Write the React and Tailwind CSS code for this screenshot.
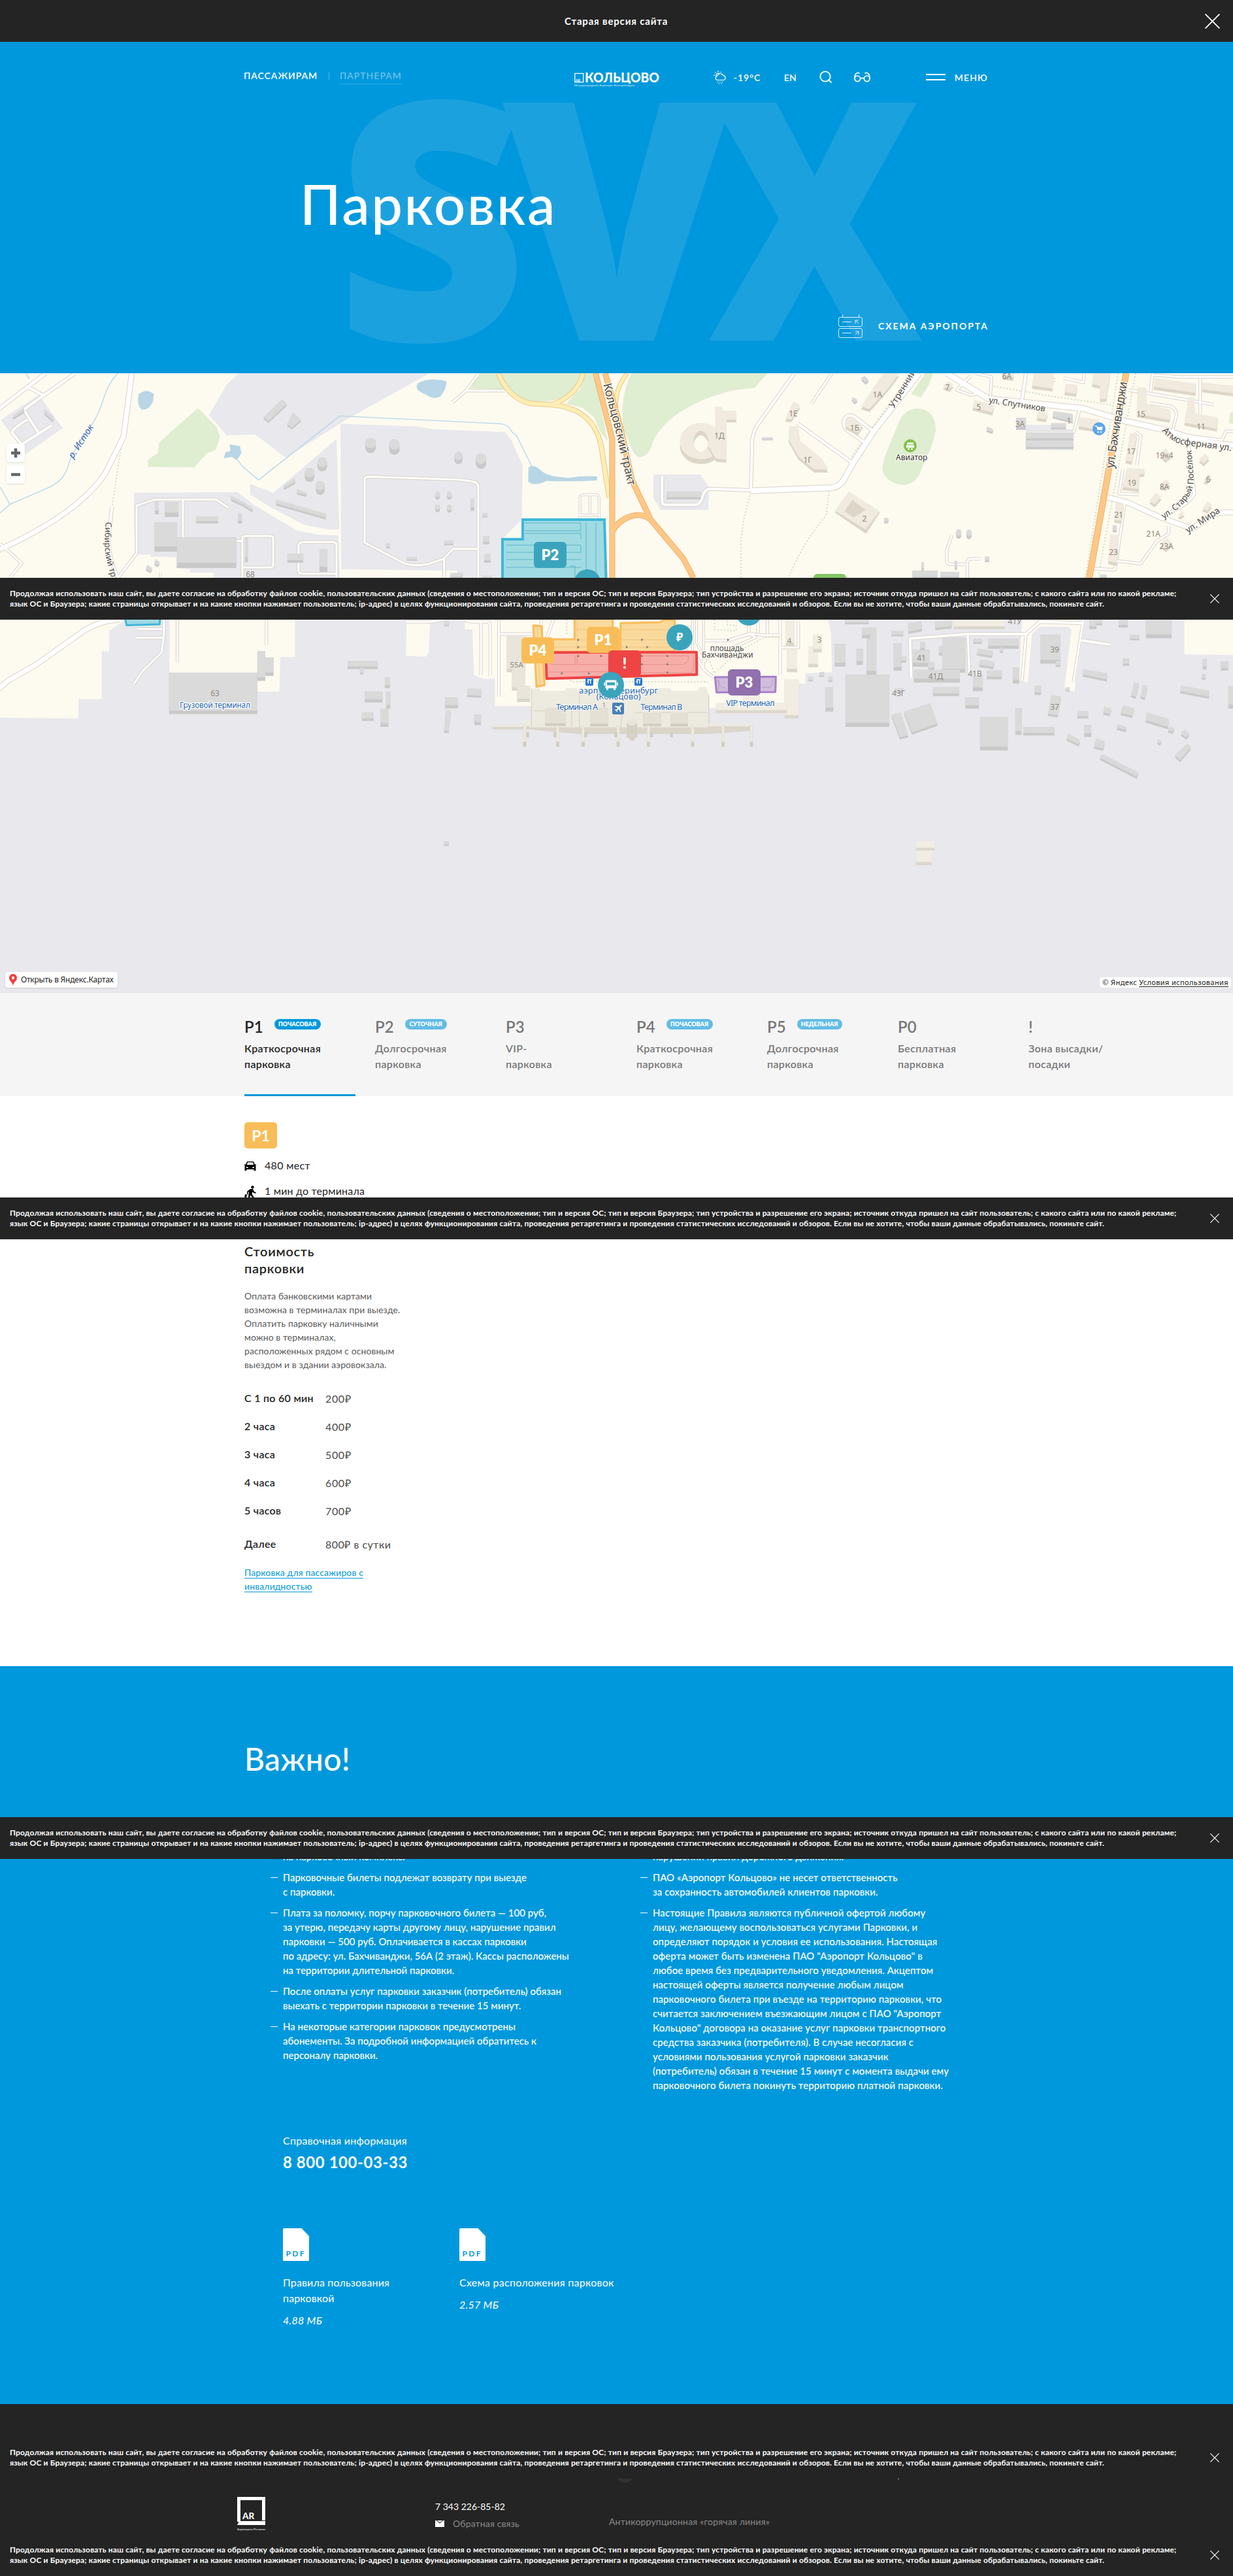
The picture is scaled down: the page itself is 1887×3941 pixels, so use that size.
import React from 'react';

const ROOF = '#dadada';
const SHADE = '#c9c9c9';
const BEIGE = '#f0eadf';
const BEIGE_SHADE = '#ddd6c8';

/* ---------- Map primitives ---------- */

const Areas = ({ list, fill }) => list.map((p, i) => <polygon key={i} points={p} fill={fill} />);

const Roads = ({ list, core = '#ffffff', edge = '#d9d2c8' }) => (
  <g fill="none" strokeLinejoin="round" strokeLinecap="butt">
    {list.map(([d, w = 4], i) => (
      <path key={i} d={d} stroke={edge} strokeWidth={w + 2} vectorEffect="non-scaling-stroke" />
    ))}
    {list.map(([d, w = 4], i) => (
      <path key={i} d={d} stroke={core} strokeWidth={w} vectorEffect="non-scaling-stroke" />
    ))}
  </g>
);

const Dots = ({ list, color = '#cfe0bd' }) => (
  <g fill="none" stroke={color} strokeWidth="2" strokeDasharray="2 3">
    {list.map((d, i) => (
      <path key={i} d={d} vectorEffect="non-scaling-stroke" />
    ))}
  </g>
);

const Blocks = ({ list, roof = ROOF, shade = SHADE, depth = 14 }) =>
  list.map(([x, y, w, h], i) => {
    const d = Math.min(depth, h * 0.3);
    return (
      <g key={i}>
        <rect x={x} y={y} width={w} height={h} fill={shade} />
        <rect x={x} y={y} width={w} height={h - d} fill={roof} />
      </g>
    );
  });

const Polys = ({ list, roof = ROOF, shade = SHADE, depth = 9 }) =>
  list.map((p, i) => (
    <g key={i}>
      <polygon points={p} fill={shade} transform={`translate(0 ${depth})`} />
      <polygon points={p} fill={roof} />
    </g>
  ));

const Tanks = ({ list }) =>
  list.map(([x, y, w, h], i) => (
    <g key={i}>
      <rect x={x - w / 2} y={y - h / 2} width={w} height={h} rx={w / 2} ry={h / 3} fill={SHADE} />
      <rect x={x - w / 2} y={y - h / 2} width={w} height={h * 0.68} rx={w / 2} ry={h / 3} fill={ROOF} />
    </g>
  ));

const Num = ({ x, y, children, fill = '#8f887c' }) => (
  <text x={x} y={y} fontSize="12" fill={fill} textAnchor="middle">
    {children}
  </text>
);

const Marker = ({ x, y, color, label }) => (
  <g>
    <rect x={x} y={y} width="50" height="40" rx="6" fill={color} />
    <text x={x + 25} y={y + 28} fontSize="22" fontWeight="800" fill="#fff" textAnchor="middle" fontFamily="Lato, sans-serif">
      {label}
    </text>
  </g>
);

function CityMap() {
  return (
    <svg width="1887" height="948" viewBox="0 0 1887 948" className="block" fontFamily="'Noto Sans', sans-serif">
      <defs>
        <path id="koltsovskiy" d="M923 17 L943 92 L963 180" />
        <path id="sibirskiy" d="M162 227 Q158 265 163 285 L175 330" />
        <path id="atmos" d="M1778 88 Q1795 108 1815 110 L1885 119" />
        <path id="posyolok" d="M1781 223 Q1826 195 1827 165 L1823 110" />
      </defs>
      <rect width="1887" height="948" fill="#fdfaf0" />

      {/* north-west quarter */}
      <g transform="matrix(.6059 0 0 .3333 0 -6)">
        <Areas
          fill="#e8e8ed"
          list={[
            '2,232 98,118 105,135 158,270 64,390 30,300',
            '603,18 1085,18 880,225 722,406 645,300 572,302 528,210 572,72',
            '860,250 1055,263 1095,275 1275,288 1290,320 1320,440 1318,690 1268,780 1268,960 1155,960 1155,924 862,918',
            '850,320 857,735 830,735 770,715 690,640 632,575 632,526 690,568',
            '338,567 600,564 640,620 750,740 800,758 855,762 858,960 540,960 540,933 480,933 480,918 445,912 445,862 380,860 380,850 340,850',
          ]}
        />
        <Areas
          fill="#dfedd1"
          list={[
            '500,178 546,262 556,310 545,370 523,385 490,450 373,448 374,415 398,385 402,335',
            '1210,18 1258,18 1278,92 1188,88',
            '1480,18 1500,18 1535,330 1518,290 1500,220 1470,175 1430,158 1465,90',
          ]}
        />
        <path d="M1265,18 H1466 C1455,100 1430,148 1360,148 C1310,145 1275,90 1265,18Z" fill="#dfedd1" />
        <g fill="#b8d6e5">
          <path d="M350,115 Q370,85 389,115 L386,150 Q375,190 358,185 Q345,165 350,115Z" />
          <path d="M1055,65 Q1080,34 1128,55 Q1128,90 1112,125 Q1095,142 1075,115 Q1045,95 1055,65Z" />
          <path d="M580,345 L606,352 L610,385 L598,417 L585,402 L565,408 L570,380 L582,375Z" />
          <path d="M1335,450 Q1348,430 1370,470 Q1390,495 1440,498 Q1470,488 1508,492 L1508,510 Q1450,516 1380,512 Q1350,540 1334,515Z" />
        </g>
        <g fill="none" stroke="#b3d8e8" strokeWidth="1.3">
          <path vectorEffect="non-scaling-stroke" d="M298,18 C260,90 265,150 240,230 C215,310 200,330 178,410 C165,500 150,520 120,545 L25,620 L0,660 M25,620 L0,540 M66,18 L74,45" />
          <path vectorEffect="non-scaling-stroke" d="M600,415 L612,445 L653,508 L858,214 L1265,250 Q1285,255 1292,285 L1305,305 L1343,445" />
        </g>
        <Dots list={['M308,335 L283,630']} />
        <Roads
          list={[
            ['M333,18 L312,310 L265,480 C220,600 130,720 -5,830', 7],
            ['M283,630 L275,760 Q272,860 298,957', 4],
            ['M115,18 L-5,185', 5],
            ['M190,18 L110,120 L60,185 L100,300', 4],
            ['M70,80 L110,120', 4],
            ['M130,258 L55,345 L30,290 Q32,270 70,230', 4],
            ['M0,800 L55,890 L25,957', 3],
            ['M577,635 L545,597 L390,598 L345,625 L345,845 L298,957', 3],
            ['M462,600 L462,775 L470,788 L612,788', 3],
            ['M612,957 V775 Q612,765 622,765 H680 Q690,765 690,775 V900 Q690,910 680,910 H612', 3],
            ['M850,957 V805 Q850,793 838,793 H770 Q754,793 754,810 V925 Q754,938 765,938 H850', 3],
            ['M1208,957 V540 Q1208,518 1190,514 L1160,506 L930,493 Q921,495 921,505 V795 L1020,890 Q1045,905 1080,895 L1120,870 L1145,824 H1205', 3],
            ['M1122,870 V957', 3],
            ['M1210,18 L1177,98 L1142,153', 3],
            ['M1177,98 L1275,98', 3],
            ['M1465,690 V590 Q1465,576 1475,576 H1505 Q1513,576 1513,590 V690', 2],
            ['M1490,580 V665 M1465,670 H1513', 2],
            ['M405,933 V957', 2],
          ]}
        />
        <Polys
          list={[
            '712,137 725,158 678,238 665,220', '740,197 761,230 737,268 725,252',
            '697,597 824,662 822,680 697,616', '583,578 616,610 616,622 584,596', '616,610 640,638 637,647 614,622',
            '745,497 746,516 718,545 716,534', '750,550 776,568 773,576 750,566', '32,212 60,178 62,190 35,222',
            '112,180 136,220 133,235 112,200', '392,870 404,886 398,900 390,890', '372,898 385,913 380,927 368,915',
          ]}
        />
        <Blocks
          depth={24}
          list={[
            [390, 703, 57, 134], [447, 772, 150, 140], [416, 610, 35, 68], [495, 675, 56, 32], [391, 608, 10, 57],
            [601, 660, 10, 48], [726, 846, 40, 42], [807, 825, 20, 105], [619, 772, 7, 113], [1189, 594, 9, 56],
            [1218, 660, 13, 20], [1220, 765, 16, 38], [1122, 786, 23, 22], [1027, 861, 26, 18], [1223, 846, 16, 42],
            [975, 798, 10, 24], [1137, 935, 32, 22], [1218, 948, 25, 10],
          ]}
        />
        <Tanks
          list={[
            [936, 350, 26, 70], [996, 357, 26, 70], [814, 437, 24, 64], [782, 485, 24, 64], [809, 545, 22, 64],
            [1158, 407, 21, 56], [1215, 422, 26, 70], [1105, 580, 12, 36], [1135, 580, 12, 36], [1105, 638, 12, 36], [1135, 640, 12, 36],
          ]}
        />
      </g>

      {/* north-east quarter */}
      <g transform="matrix(.6059 0 0 .3333 937 -6)">
        <path d="M50,18 H392 L360,85 L310,95 C200,140 130,230 103,330 C98,380 80,405 70,404 C55,400 50,370 30,280 C20,200 28,80 50,18Z" fill="#dfedd1" />
        <path d="M770,180 C800,178 817,220 817,280 C810,350 800,380 785,440 C775,500 760,530 733,530 C700,525 683,490 682,450 C690,380 705,330 725,240 C735,200 750,182 770,180Z" fill="#dfedd1" />
        <Areas fill="#dfedd1" list={['790,18 810,18 800,70 780,128 755,115', '1560,200 1568,195 1568,250 1558,248']} />
        <Areas fill="#e8e8ed" list={['104,483 222,483 244,540 243,645 122,645 104,590', '1045,255 1107,255 1107,275 1165,275 1165,372 1043,369']} />
        <Dots list={['M755,18 L603,405', 'M350,565 L332,690 L325,790 V957', 'M548,560 L540,670 Q480,800 445,957', 'M1322,18 L1227,957', 'M1278,18 L1195,957', 'M955,75 L1115,125 L1265,165']} />
        <Roads
          list={[
            ['M460,18 L365,260 Q350,310 353,370 L350,555', 4],
            ['M350,555 L245,548 Q235,550 230,575 L222,610 Q218,622 208,622 H135 Q126,622 126,610 V488', 4],
            ['M350,557 L555,544 Q580,535 590,490 L608,430 L660,285 L775,18', 8],
            ['M555,18 L503,158', 3], ['M467,247 L607,430', 4],
            ['M660,285 L610,215 Q595,205 588,225 Q580,250 590,275 L640,340', 4],
            ['M845,18 L950,135 L1190,180 L1290,235 L1400,280 Q1500,345 1570,348', 8],
            ['M1045,18 L1035,140', 4], ['M918,18 L958,35 L955,120', 3], ['M905,30 L870,95 L905,118 L930,110', 3],
            ['M1098,18 Q1095,48 1120,50', 3], ['M1140,40 L1190,60 L1192,18', 3], ['M1305,95 L1520,162', 3],
            ['M1365,18 L1360,100', 3], ['M1358,155 L1410,170 Q1425,180 1425,210 L1415,285', 3], ['M1485,40 V205', 3],
            ['M1365,25 L1430,35 L1568,35', 3], ['M1180,190 L1165,290 H1048', 3], ['M1320,285 L1335,305 L1325,440', 3],
            ['M1250,587 L1300,610 L1385,680 L1465,732 L1500,690 Q1520,650 1570,658', 7],
            ['M1455,350 L1470,570 Q1460,620 1380,680', 4], ['M1295,610 L1270,920 L1215,915', 3],
            ['M1275,880 L1335,892 L1375,790 L1405,755 V720', 3], ['M1290,460 L1280,570 L1330,575', 3],
            ['M858,760 L845,830 V885 Q848,895 860,895 H895 M930,870 H905 Q897,870 897,885 V957', 3],
            ['M1455,305 L1540,325 L1550,285 H1568', 3],
          ]}
        />
        <Roads core="#fdeeb3" edge="#e9c98c" list={[
          ['M-288,18 C-270,100 -235,160 -186,160 C-106,160 -46,200 -28,350 L-8,590', 6],
          ['M-74,18 C-82,90 -116,140 -150,160', 6],
          ['M38,18 C5,90 5,160 14,250', 5],
        ]} />
        <Roads core="#fdc886" edge="#eeb06c" list={[
          ['M-42,18 L0,320 V957', 7], ['M-18,18 L20,260 L50,510 L97,690 L180,870 L205,957', 7],
          ['M0,745 C20,680 65,645 97,690', 7], ['M1298,18 L1205,957', 8],
        ]} />
        <ellipse cx="224" cy="332" rx="36" ry="66" fill="none" stroke={BEIGE_SHADE} strokeWidth="34" transform="translate(0 20)" />
        <ellipse cx="224" cy="330" rx="36" ry="66" fill="none" stroke={BEIGE} strokeWidth="34" />
        <Polys roof={BEIGE} shade={BEIGE_SHADE} depth={14} list={[
          '260,172 278,172 278,190 313,190 313,230 288,230 288,415 262,410 240,345 262,330',
          '458,147 475,165 452,230 437,225', '447,260 470,262 475,330 500,365 530,410 545,460 510,460 470,400 445,320',
          '685,18 725,18 700,80 650,182 628,170', '590,230 605,215 634,255 620,290 588,260',
          '848,55 862,70 852,90 835,78', '915,140 965,165 960,198 910,175', '985,18 1015,18 1012,40 985,32',
          '1065,18 1115,18 1112,88 1060,75', '1145,66 1175,72 1172,112 1142,105', '1215,18 1258,18 1248,136 1232,136 1232,75 1212,68',
          '1370,40 1475,65 1473,108 1367,80', '1490,60 1568,75 1568,110 1490,92', '1327,82 1350,85 1350,160 1410,185 1408,232 1325,205',
          '1455,130 1470,130 1472,200 1530,222 1527,272 1445,245', '1308,292 1326,300 1312,425 1296,418',
          '1300,452 1345,458 1343,480 1332,480 1330,550 1288,540', '1272,612 1293,618 1286,695 1268,690', '1258,758 1280,762 1274,888 1252,880',
          '1075,190 1100,200 1095,230 1072,222', '1180,220 1230,230 1225,275 1178,262',
          '1398,362 1412,395 1398,415 1383,392', '1497,388 1508,405 1494,432 1482,412', '1399,503 1410,525 1396,545 1384,530',
          '1506,478 1514,492 1503,515 1493,510', '1373,568 1387,585 1370,620 1357,602', '1504,605 1515,622 1503,648 1490,638',
          '1438,652 1446,660 1436,676 1428,670', '1400,772 1414,800 1398,825 1384,802',
        ]} />
        <polygon points="598,562 676,658 641,755 562,658" fill={BEIGE_SHADE} />
        <path fillRule="evenodd" d="M598,562 L675,650 L640,735 L562,648Z M606,600 L640,645 L610,680 L587,652Z" fill={BEIGE} />
        <Polys list={['1115,192 1163,205 1163,240 1112,216', '628,40 638,30 648,50 640,62', '604,133 610,128 620,142 612,152', '947,262 963,275 960,288 945,278']} />
        <Blocks list={[[137, 562, 87, 35], [758, 924, 64, 40], [829, 930, 47, 30], [941, 860, 11, 25], [1020, 223, 25, 55], [1108, 248, 38, 28], [1045, 290, 120, 38], [1045, 332, 120, 34], [1264, 716, 10, 32], [1232, 942, 17, 15], [378, 312, 28, 14], [781, 885, 6, 40], [865, 880, 6, 40]]} />
        <Tanks list={[[875, 756, 13, 44], [901, 758, 13, 44], [692, 695, 11, 26]]} />
      </g>

      {/* airfield */}
      <rect y="377" width="1887" height="571" fill="#e8e8ed" />
      <g transform="matrix(.6059 0 0 .3763 0 369)">
        <Areas fill="#fdfaf0" list={[
          '0,20 320,20 276,66 276,150 257,150 257,344 198,344 198,423 0,420',
          '428,20 745,20 745,174 708,173 706,314 650,314 650,237 428,237',
          '1027,20 1086,38 1083,155 1075,172 1025,168',
          '1174,20 1570,20 1570,372 1250,372 1250,262 1220,262 1197,245 1193,61 1174,61',
        ]} />
        <Roads list={[
          ['M300,20 Q240,30 200,80 L90,205 L20,270 L-5,305', 7], ['M414,20 V80 L408,155 L360,230 L338,283', 3],
          ['M348,60 H410 M343,95 H410', 3], ['M448,20 V195', 3], ['M673,20 V125', 3], ['M1027,30 H1090 L1120,22', 3],
          ['M1172,22 L1190,30 H1230 Q1238,30 1238,45 V250 M1215,30 V245', 3], ['M1260,20 V335 M1260,80 H1345 M1367,20 V60 M1398,20 L1380,100', 3],
        ]} />
        <Blocks list={[
          [427, 237, 223, 168], [664, 175, 27, 75], [650, 150, 20, 120], [878, 190, 76, 32], [909, 218, 9, 26], [972, 255, 13, 45], [921, 314, 45, 44],
          [975, 314, 11, 68], [914, 399, 30, 34], [961, 383, 20, 74], [1124, 338, 33, 44], [1198, 408, 17, 42], [1121, 922, 13, 19], [1122, 28, 12, 20],
        ]} />
        <Polys list={['1181,300 1216,303 1215,330 1180,327', '1126,388 1139,390 1133,474 1121,472']} />
        <Blocks roof="#e9e5da" shade="#dad6ca" list={[[1280, 85, 47, 150], [1293, 200, 33, 110], [1306, 290, 33, 66]]} />
        <polygon points="315,10 405,10 403,40 320,44" fill="#9fd9e4" stroke="#3db8d8" strokeWidth="3" vectorEffect="non-scaling-stroke" />
      </g>
      <g transform="matrix(.6059 0 0 .3763 937 369)">
        <Areas fill="#fdfaf0" list={[
          '-5,20 545,20 553,80 555,235 488,240 488,282 470,282 470,380 -5,380', '1445,20 1570,20 1570,165 1445,162',
          '1035,20 1195,20 1167,315 1142,300 1160,60 1150,50 1080,50 1060,80 1050,275 1028,270',
        ]} />
        <Roads list={[
          ['M755,257 L752,98 L900,80 H1045 L1080,30 L1190,35', 4], ['M1190,20 L1165,275', 3], ['M1045,80 L1035,270', 3], ['M898,82 L902,240', 3],
          ['M1183,105 L1258,123', 4], ['M424,20 V245', 3], ['M424,135 H470 V30', 3], ['M345,20 V78 M368,20 V80 M392,20 V78', 3],
        ]} />
        <Blocks depth={16} list={[
          [589, 245, 111, 212], [642, 53, 25, 192], [631, 53, 20, 44], [562, 120, 27, 92], [617, 140, 16, 65], [538, 295, 20, 100], [711, 117, 20, 112],
          [728, 170, 14, 26], [705, 67, 30, 22], [588, 18, 60, 22], [759, 143, 42, 70], [778, 112, 12, 34], [825, 128, 12, 40], [834, 95, 58, 142],
          [762, 225, 116, 52], [798, 195, 16, 30], [912, 98, 22, 22], [949, 98, 78, 42], [979, 135, 8, 22], [946, 228, 38, 36], [911, 250, 25, 62],
          [1012, 215, 16, 66], [1081, 82, 51, 118], [1120, 190, 12, 24], [1067, 290, 16, 38], [1145, 297, 10, 17], [810, 295, 66, 37], [713, 300, 22, 20],
          [892, 338, 34, 45], [929, 417, 70, 136], [1018, 380, 16, 110], [1038, 458, 79, 34], [1175, 393, 27, 30], [1192, 450, 18, 48], [1205, 20, 18, 40], [1222, 20, 16, 24],
          [1279, 20, 23, 33], [1307, 83, 24, 22], [1348, 25, 65, 72], [1290, 178, 16, 31], [1491, 182, 10, 42], [1537, 192, 19, 36], [1489, 243, 10, 22],
          [1556, 293, 12, 90], [523, 234, 12, 20], [495, 254, 12, 18], [546, 253, 10, 22],
        ]} />
        <Polys list={[
          '747,35 782,28 782,60 748,70', '815,28 858,25 857,48 816,55', '924,138 962,148 958,168 920,158', '930,183 966,192 962,214 926,204',
          '1109,328 1134,332 1125,410 1100,404', '705,408 728,398 748,490 727,500', '737,395 803,360 822,444 757,480', '1190,222 1251,240 1249,264 1188,244',
          '1436,288 1508,310 1507,334 1434,312', '1318,275 1330,280 1322,334 1310,328', '1340,285 1352,290 1345,340 1334,333', '1243,375 1261,383 1256,405 1240,398',
          '1290,368 1318,382 1313,412 1284,400', '1350,398 1406,425 1404,458 1347,430', '1277,445 1299,457 1297,470 1274,460', '1408,455 1420,462 1415,477 1403,470',
          '1445,467 1458,483 1450,500 1436,484', '1152,485 1182,510 1178,528 1147,504', '1222,503 1244,515 1240,546 1216,536', '1452,525 1462,540 1434,592 1421,572',
          '1237,567 1329,642 1325,660 1231,582', '1378,507 1388,515 1383,524 1377,518',
        ]} />
        <Blocks roof="#f1ede3" shade="#ddd8cc" list={[[441, 145, 26, 90], [438, 20, 22, 108], [495, 130, 25, 85], [507, 82, 22, 72], [863, 20, 128, 40], [435, 265, 36, 158], [262, 360, 180, 42], [330, 330, 42, 40], [767, 922, 47, 38], [767, 960, 40, 60]]} />
      </g>

      {/* terminal and central parking */}
      <g transform="translate(760 369) scale(.33333)">
        <Dots list={['M322,24 V95', 'M330,290 L345,308 L970,310', 'M1000,24 V70 L1100,75 V50 L1060,48 V24', 'M1300,105 H1230 L1110,170 L1000,270 L975,205']} />
        <Roads list={[
          ['M900,24 V170', 2], ['M918,24 V130 L960,210 L940,230', 2], ['M950,24 V260', 2], ['M885,50 L870,170', 2],
          ['M955,120 H1060 L1160,90 L1190,105 L1090,150', 3], ['M1160,88 L1230,95 H1300', 3], ['M925,200 Q940,260 1010,295', 3],
        ]} />
        <path d="M118,488 H160 V340 H200 V348 H318 V336 H372 V348 H740 V336 H800 V350 H928 V332 H962 L976,370 V505 H1176 V528 L970,543 H380 L150,522 H-18 V510 H118Z" fill="#dad6ca" transform="translate(0 6)" />
        <path d="M118,486 H160 L163,340 H200 V350 H318 V338 H372 V350 H740 V338 H800 V350 H928 V334 H962 L974,370 V502 H1176 V514 H970 V518 H150 V514 H-18 V506 H118Z" fill="#edeae0" />
        <Blocks roof="#e4e0d4" shade="#d2cdc0" depth={12} list={[[222, 430, 95, 82], [430, 430, 82, 84], [673, 450, 82, 64], [798, 450, 80, 64]]} />
        <g stroke="#d2cdc0" strokeWidth="3" fill="none">
          <path d="M170,442 H222 M380,340 V520 M345,440 V515 M580,420 L570,520 M636,450 H673 M755,450 H798 M878,450 H968 M160,340 V515 M974,370 V505" />
        </g>
        {[129, 280, 397, 558, 697, 900, 1040, 1170].map((x) => (
          <g key={x}>
            <rect x={x - 6} y="512" width="12" height="94" fill="#edeae0" stroke="#dad6ca" strokeWidth="1.5" />
            <rect x={x - 7} y="584" width="14" height="23" fill="#d2cdc0" />
          </g>
        ))}
        {[142, 267, 409, 547, 711, 803].map((x) => (
          <rect key={x} x={x - 6} y="540" width="13" height="24" fill="#d2cdc0" />
        ))}
        <path d="M597,500 Q620,465 645,500 V565 L632,570 V580 H612 V570 L597,565Z" fill="#d6d1c4" />
        <ellipse cx="621" cy="495" rx="22" ry="16" fill="#e9e5da" />

        <g strokeWidth="9" strokeLinejoin="round">
          <g fill="#f8bd58" fillOpacity=".55" stroke="#f8bd58">
            <path d="M168,50 L207,54 L220,325 L183,332Z" />
            <path d="M358,20 H533 V172 H240 V114 H358Z" />
            <path d="M569,40 L750,36 L768,25 H818 V172 H569Z" />
          </g>
          <g fill="none" stroke="#d99f45" strokeOpacity=".45" strokeWidth="2">
            <path d="M366,70 H528 M366,117 H528 M265,150 H528 M575,70 H812 M575,116 H812 M575,150 H812 M370,30 V165 M186,60 L198,320" />
          </g>
          <path d="M226,175 L918,173 L919,276 L230,295Z" fill="#ee4444" fillOpacity=".42" stroke="#ee4444" strokeWidth="12" />
          <path d="M240,190 V215 Q240,230 260,230 H360 V190 M370,190 V230 H520 M240,265 L520,262 M660,190 H880 V205 Q875,228 850,230 H660 M660,268 H895 Q905,265 905,190" fill="none" stroke="#c86464" strokeOpacity=".6" strokeWidth="2" />
          <path d="M1003,288 L1282,286 L1280,356 L1010,358Z" fill="#a680c6" fillOpacity=".5" stroke="#a680c6" />
          <path d="M1015,300 Q1020,335 1050,338 M1020,300 V345 M1215,335 H1255 Q1268,325 1268,298" fill="none" stroke="#8f6cae" strokeOpacity=".6" strokeWidth="2" />
        </g>
        <g fill="#777">
          {[[375, 117], [375, 150], [668, 116], [598, 150], [692, 150], [375, 191], [480, 191], [668, 191], [785, 191], [668, 229], [785, 229], [300, 271], [424, 271], [785, 266], [1063, 117]].map(([x, y]) => (
            <path key={x + '-' + y} d={`M${x - 4},${y - 6} L${x + 6},${y} L${x - 4},${y + 6}Z`} />
          ))}
        </g>
        {[408, 633].map((x) => (
          <g key={x}>
            <rect x={x} y="291" width="36" height="36" rx="5" fill="#2a78d2" />
            <path d={`M${x + 9},300 H${x + 28} M${x + 13},300 V318 M${x + 23},300 V318 M${x + 13},308 H${x + 6}`} stroke="#fff" strokeWidth="4" fill="none" />
          </g>
        ))}
        <g fontSize="38" fill="#2464ac" stroke="#fff" strokeWidth="5" strokeLinejoin="round" paintOrder="stroke" textAnchor="middle">
          <text x="560" y="363" textLength="362">аэрп. Екатеринбург</text>
          <text x="560" y="390" textLength="204">(Кольцово)</text>
          <text x="369" y="438" textLength="192">Терминал A</text>
          <text x="757" y="438" textLength="192">Терминал B</text>
          <text x="1165" y="420" textLength="222">VIP терминал</text>
        </g>
        <g fontSize="36" fill="#4b4b4b" stroke="#fdfaf0" strokeWidth="6" strokeLinejoin="round" paintOrder="stroke" textAnchor="middle">
          <text x="1058" y="167" textLength="155">площадь</text>
          <text x="1060" y="199" textLength="236">Бахчиванджи</text>
        </g>
        <g fontSize="34" fill="#8f887c" textAnchor="middle">
          <text x="92" y="242">55А</text>
          <text x="1344" y="132">4</text>
          <text x="493" y="425" fontSize="28">1</text>
        </g>
        <rect x="531" y="405" width="54" height="54" rx="8" fill="#4a7fb8" />
        <path transform="translate(536 410) scale(1.85)" fill="#fff" d="M21 3.5c-.9-.9-2.400-.9-3.300 0L14 7.200 4.500 5 3 6.500l8 4.200-4 4-2.600-.4L3 15.700l3.600 1.700L8.300 21l1.400-1.400-.4-2.600 4-4 4.200 8 1.500-1.500L16.800 10l3.700-3.700c.9-.9 1.400-1.900.5-2.800z" />
      </g>

      {/* P2 */}
      <path d="M800,224 H925 L928,330 H769 V254 H800Z" fill="#4bbdd6" fillOpacity=".52" stroke="#3db8d8" strokeWidth="4" />
      <path d="M803,229 H889 V241 H803 M803,245 H889 V254 M775,263 H889 V274 H775 M775,285 H889 M775,297 H889 M897,229 V310 M912,229 V310 M872,295 H880 V313" fill="none" stroke="#5fb4c6" strokeWidth="1" />

      <g fill="#4f4f4f" stroke="#fdfaf0" strokeWidth="2.500" strokeLinejoin="round" paintOrder="stroke" fontSize="14">
        <text fontSize="18"><textPath href="#koltsovskiy" textLength="160">Кольцовский тракт</textPath></text>
        <text fontSize="13"><textPath href="#sibirskiy">Сибирский тракт</textPath></text>
        <text><textPath href="#atmos">Атмосферная ул.</textPath></text>
        <text fontSize="13"><textPath href="#posyolok">ул. Старый Посёлок</textPath></text>
        <text transform="translate(1368 54) rotate(-59)">Утренний пер.</text>
        <text transform="translate(1513 45) rotate(9)" fontSize="13">ул. Спутников</text>
        <text transform="translate(1704 146) rotate(-81)" fontSize="18" textLength="134">ул. Бахчиванджи</text>
        <text transform="translate(1818 245) rotate(-33)">ул. Мира</text>
        <text x="1371" y="133" fontSize="12" fill="#333">Авиатор</text>
      </g>
      <text transform="translate(112 131) rotate(-57)" fontSize="14" fontStyle="italic" fill="#3b62b5">р. Исток</text>
      <Num x={383} y={312}>68</Num>
      <g>
        {[[1541, 9, '6А'], [1450, 26, '7'], [1343, 37, '1А'], [1214, 66, '1Е'], [1101, 100, '1Д'], [1308, 88, '1Б'], [1236, 137, '1Г'], [1498, 56, '5'], [1561, 82, '3А'], [1636, 77, '1'], [1746, 67, '15'], [1838, 86, '11'], [1731, 124, '17'], [1782, 130, '19к4'], [1732, 172, '19'], [1782, 178, '8А'], [1849, 167, '6'], [1323, 227, '2'], [1712, 221, '21'], [1765, 250, '21А'], [1704, 278, '23'], [1785, 269, '23А'],
          [1553, 384, '41У'], [1254, 412, '3'], [1410, 440, '41'], [1614, 427, '39'], [1432, 468, '41Д'], [1492, 464, '41В'], [1375, 494, '43Г'], [1614, 515, '37'], [329, 494, '63']].map(([x, y, t]) => (
          <Num key={t + x} x={x} y={y}>{t}</Num>
        ))}
      </g>
      <text x="329" y="512" fontSize="12" fill="#2464ac" stroke="#fff" strokeWidth="2.500" paintOrder="stroke" textAnchor="middle" textLength="108">Грузовой терминал</text>

      <circle cx="1393" cy="111" r="10" fill="#84c04f" />
      <path d="M1388 106h10v3h-10zM1387 110h12v4h-12zM1389 115h3v2h-3zM1394 115h3v2h-3z" fill="#fff" />
      <circle cx="1682" cy="85" r="10" fill="#5ba6ef" />
      <path d="M1676.500 80.500h2l1.500 6h6l1-4h-7z" fill="#fff" stroke="#fff" strokeWidth="1.200" />
      <circle cx="1680.500" cy="90" r="1.200" fill="#fff" /><circle cx="1685" cy="90" r="1.200" fill="#fff" />

      <circle cx="899" cy="320" r="20" fill="#3ba4bd" />
      <rect x="1245" y="307" width="50" height="40" rx="6" fill="#82c566" />
      <circle cx="1146" cy="366" r="20" fill="#3ba4bd" />
      <Marker x={817} y={258} color="#3ba4bd" label="P2" />
      <Marker x={798} y={404} color="#f8bd58" label="P4" />
      <Marker x={898} y={388} color="#f8bd58" label="P1" />
      <Marker x={931} y={424} color="#ee4444" label="!" />
      <Marker x={1114} y={453} color="#9070ad" label="P3" />
      <circle cx="1040" cy="404" r="20" fill="#3ba4bd" />
      <text x="1040" y="410" fontSize="17" fontWeight="700" fill="#fff" textAnchor="middle">₽</text>
      <circle cx="935" cy="477" r="20" fill="#3ba4bd" />
      <path d="M928 469.500h14q1.500 0 1.500 1.500v11h-1.500v2.500h-3v-2.500h-8v2.500h-3v-2.500h-1.500v-11q0-1.500 1.500-1.500z M929 473v4.500h12v-4.500z" fill="#fff" fillRule="evenodd" />
      <path d="M925 473v5M945 473v5" stroke="#fff" strokeWidth="1.500" />
    </svg>
  );
}

/* ---------- Page pieces ---------- */

const Cross = ({ size, w = 1.3 }) => (
  <svg width={size} height={size} viewBox="0 0 20 20" stroke="#fff" strokeWidth={(w * 20) / size} fill="none">
    <path d="M.5 .5l19 19M19.500 .5l-19 19" />
  </svg>
);

const CookieBar = ({ pos }) => (
  <div className={`absolute left-0 flex h-16 w-full bg-[#242424] pt-4 pl-[15px] text-[12px] leading-4 font-bold text-white ${pos}`}>
    <p className="w-[1837px] tracking-[0.155px] whitespace-nowrap">
      Продолжая использовать наш сайт, вы даете согласие на обработку файлов cookie, пользовательских данных (сведения о местоположении; тип и версия ОС; тип и версия Браузера; тип устройства и разрешение его экрана; источник откуда пришел на сайт пользователь; с какого сайта или по какой рекламе;
      <br />
      язык ОС и Браузера; какие страницы открывает и на какие кнопки нажимает пользователь; ip-адрес) в целях функционирования сайта, проведения ретаргетинга и проведения статистических исследований и обзоров. Если вы не хотите, чтобы ваши данные обрабатывались, покиньте сайт.
    </p>
    <div className="pt-[9px]">
      <Cross size={14} w={1.2} />
    </div>
  </div>
);

const tabs = [
  { id: 'P1', badge: 'ПОЧАСОВАЯ', pad: 'ml-[17px]', w: 'w-[71px]', a: 'Краткосрочная', b: 'парковка', on: true },
  { id: 'P2', badge: 'СУТОЧНАЯ', pad: 'ml-[17px]', w: 'w-[64px]', a: 'Долгосрочная', b: 'парковка' },
  { id: 'P3', a: 'VIP-', b: 'парковка' },
  { id: 'P4', badge: 'ПОЧАСОВАЯ', pad: 'ml-[17px]', w: 'w-[71px]', a: 'Краткосрочная', b: 'парковка' },
  { id: 'P5', badge: 'НЕДЕЛЬНАЯ', pad: 'ml-[17px]', w: 'w-[69px]', a: 'Долгосрочная', b: 'парковка' },
  { id: 'P0', a: 'Бесплатная', b: 'парковка' },
  { id: '!', a: 'Зона высадки/', b: 'посадки' },
];

const prices = [
  ['С 1 по 60 мин', '200₽'],
  ['2 часа', '400₽'],
  ['3 часа', '500₽'],
  ['4 часа', '600₽'],
  ['5 часов', '700₽'],
];

const rulesLeft = [
  ['на парковочный комплекс.'],
  ['Парковочные билеты подлежат возврату при выезде', 'с парковки.'],
  ['Плата за поломку, порчу парковочного билета — 100 руб,', 'за утерю, передачу карты другому лицу, нарушение правил', 'парковки — 500 руб. Оплачивается в кассах парковки', 'по адресу: ул. Бахчиванджи, 56А (2 этаж). Кассы расположены', 'на территории длительной парковки.'],
  ['После оплаты услуг парковки заказчик (потребитель) обязан', 'выехать с территории парковки в течение 15 минут.'],
  ['На некоторые категории парковок предусмотрены', 'абонементы. За подробной информацией обратитесь к', 'персоналу парковки.'],
];
const rulesRight = [
  ['нарушений правил дорожного движения.'],
  ['ПАО «Аэропорт Кольцово» не несет ответственность', 'за сохранность автомобилей клиентов парковки.'],
  ['Настоящие Правила являются публичной офертой любому', 'лицу, желающему воспользоваться услугами Парковки, и', 'определяют порядок и условия ее использования. Настоящая', 'оферта может быть изменена ПАО "Аэропорт Кольцово" в', 'любое время без предварительного уведомления. Акцептом', 'настоящей оферты является получение любым лицом', 'парковочного билета при въезде на территорию парковки, что', 'считается заключением въезжающим лицом с ПАО "Аэропорт', 'Кольцово" договора на оказание услуг парковки транспортного', 'средства заказчика (потребителя). В случае несогласия с', 'условиями пользования услугой парковки заказчик', '(потребитель) обязан в течение 15 минут с момента выдачи ему', 'парковочного билета покинуть территорию платной парковки.'],
];

const Rules = ({ items, spacing }) => (
  <ul className={`flex w-[566px] flex-col gap-2.5 text-[15px] leading-[22px] font-medium whitespace-nowrap ${spacing}`}>
    {items.map((lines, i) => (
      <li key={i} className="flex">
        <span className="mt-[11px] mr-2 h-px w-[11px] shrink-0 bg-white" />
        <div>
          {lines.map((l) => (
            <p key={l}>{l}</p>
          ))}
        </div>
      </li>
    ))}
  </ul>
);

const Pdf = () => (
  <svg width="40" height="50" viewBox="0 0 40 50">
    <path d="M1.500 0H28.500L40 12V48.500Q40 50 38.500 50H1.500Q0 50 0 48.500V1.500Q0 0 1.500 0Z" fill="#fff" />
    <text x="4.500" y="43" fontSize="12" fontWeight="700" letterSpacing="2.300" fill="#0098dc" fontFamily="Lato, sans-serif">PDF</text>
  </svg>
);

export default function App() {
  return (
    <div className="relative h-[3941px] w-[1887px] overflow-hidden bg-white font-['Lato','Open_Sans',sans-serif] text-[#242424]">
      <div className="flex h-16 items-center bg-[#242424] text-white">
        <div className="w-[1844px] pl-[864px] text-[15px] font-bold tracking-[0.83px] whitespace-nowrap">Старая версия сайта</div>
        <Cross size={23} w={1.8} />
      </div>

      <header className="relative h-[507px] bg-[#0098dc] text-white">
        <svg className="absolute top-0 left-0" width="1887" height="507" fontSize="510" fontWeight="800" fill="#1ca1df" fontFamily="'Open Sans', sans-serif">
          <text x="513" y="457">S</text>
          <text x="769" y="457" textLength="350" lengthAdjust="spacingAndGlyphs">V</text>
          <text x="1084" y="457" textLength="328" lengthAdjust="spacingAndGlyphs">X</text>
        </svg>
        <div className="relative pl-[373px]">
          <div className="flex h-[98px] items-start pt-[42px] text-[14px] leading-5 font-semibold whitespace-nowrap">
            <a className="w-[130px] tracking-[0.95px]">ПАССАЖИРАМ</a>
            <span className="mt-[5px] h-[11px] w-px bg-white/30" />
            <a className="ml-4 border-b border-dotted border-white/40 pb-0.5 font-medium tracking-[1px] text-white/45">ПАРТНЕРАМ</a>
            <div className="ml-[264px] w-[213px]">
              <svg width="132" height="22" viewBox="0 0 132 22" fontFamily="Lato, sans-serif">
                <path d="M.8 6.300h12.900v13.400H.8z" fill="none" stroke="#fff" strokeWidth="1.300" />
                <text x="2" y="18.500" fontSize="5" fontWeight="900" fill="#fff">AR</text>
                <text x="16" y="20" fontSize="20" fontWeight="900" fill="#fff" textLength="114" lengthAdjust="spacingAndGlyphs" letterSpacing="0">КОЛЬЦОВО</text>
              </svg>
              <p className="-mt-px text-[4.6px] leading-[6px] font-normal tracking-[0.050px] text-white/80">Международный Аэропорт Екатеринбурга</p>
            </div>
            <svg className="mt-0.5 w-[31px]" width="20" height="21" viewBox="0 0 20 21" fill="none" stroke="#fff" strokeWidth="1.200" preserveAspectRatio="xMinYMin">
              <path d="M6 14.500a3.200 3.200 0 0 1-.3-6.300A5 5 0 0 1 15 7.700a3.500 3.500 0 0 1 .7 6.800H6z M3.700 8.500a4 4 0 0 1 5.500-4.300" />
              <path d="M7 0v2M2.200 2.200l1.200 1.200M0 7h2M11.500 2l-1 1" />
              <path d="M6 17.500h1M9.500 17.500h1M13 17.500h1M7.700 20h1M11.500 20h1" strokeWidth="1.500" />
            </svg>
            <span className="mt-[3px] w-[77px] tracking-[1px]">-19°C</span>
            <span className="mt-[3px] w-[54px] tracking-[0.3px]">EN</span>
            <svg className="mt-[2px] mr-[33px]" width="20" height="20" viewBox="0 0 20 20" fill="none" stroke="#fff" strokeWidth="1.800">
              <circle cx="9" cy="9" r="7.700" />
              <path d="M13.500 13.500l5 5" />
            </svg>
            <svg className="mt-1 mr-[85px]" width="25" height="16" viewBox="0 0 25 16" fill="none" stroke="#fff" strokeWidth="1.700">
              <circle cx="5.300" cy="10.300" r="4.300" />
              <circle cx="19.700" cy="10.300" r="4.300" />
              <path d="M9.500 10.500q3-2.200 6 0M1 10.300Q1 3 4.500 1.700Q7 .6 8.500 2.600M24 10.300Q24 3 20.500 1.700Q18 .6 16.500 2.600" />
            </svg>
            <span className="mt-[7px] mr-[14px] flex w-[30px] flex-col gap-[6px]">
              <i className="h-0.5 bg-white" />
              <i className="h-0.5 bg-white" />
            </span>
            <span className="mt-[3px] tracking-[1.100px]">МЕНЮ</span>
          </div>
          <h1 className="pt-[101px] pl-[86px] text-[85px] leading-[96px] font-medium tracking-[2.600px]">Парковка</h1>
          <div className="mt-[122px] flex items-center pl-[910px]">
            <svg width="37" height="36" viewBox="0 0 37 36" fill="none" stroke="#fff" strokeOpacity=".85" strokeWidth="1">
              <path d="M6.500 0v4M31.500 0v4" />
              <rect x=".5" y="4.500" width="36" height="14" rx="2.500" />
              <rect x=".5" y="21.500" width="36" height="14" rx="2.500" />
              <path d="M6 11.500h14M6 28.500h14M26 14v-5h5M26 9l5 5M26 31l5-5h-5M31 26v5" />
            </svg>
            <span className="ml-[24px] text-[14px] leading-5 font-bold tracking-[1.950px] whitespace-nowrap">СХЕМА АЭРОПОРТА</span>
          </div>
        </div>
      </header>

      <section className="relative h-[948px]">
        <CityMap />
        <div className="absolute top-[108px] left-[10px] flex flex-col gap-[5px]">
          {['M9 14h10M14 9v10', 'M9 14h10'].map((d) => (
            <button key={d} className="size-7 rounded bg-white shadow">
              <svg width="28" height="28" stroke="#666" strokeWidth="3.200">
                <path d={d} transform="translate(-5.600 -5.600) scale(1.400)" />
              </svg>
            </button>
          ))}
        </div>
        <div className="absolute top-[916px] left-2 flex h-6 w-[172px] items-center rounded bg-white pl-1.5 font-['Noto_Sans',sans-serif] text-[12px] whitespace-nowrap shadow">
          <svg width="12" height="18" viewBox="0 0 12 18">
            <path d="M6 0a6 6 0 0 0-6 6c0 4.500 5 6 6 12 1-6 6-7.500 6-12a6 6 0 0 0-6-6z" fill="#f83a3a" />
            <circle cx="6" cy="6" r="2.200" fill="#fff" />
          </svg>
          <span className="ml-1.5 tracking-[-0.2px]">Открыть в Яндекс.Картах</span>
        </div>
        <div className="absolute top-[924px] right-[3px] h-4 rounded-sm bg-white/85 px-1 font-['Noto_Sans',sans-serif] text-[11px] leading-4 tracking-[0.380px] whitespace-nowrap">
          © Яндекс <u className="underline-offset-2">Условия использования</u>
        </div>
      </section>

      <nav className="flex h-[158px] bg-[#f5f5f5] pl-[374px]">
        {tabs.map((t) => (
          <div key={t.id} className={`w-[200px] pt-[36px] ${t.on ? 'text-[#242424]' : 'text-[#777]'}`}>
            <div className="flex h-8 items-start">
              <span className="text-[24px] leading-8 font-semibold">{t.id}</span>
              {t.badge && (
                <span className={`mt-1 h-4 rounded-full text-center text-[9px] leading-4 font-extrabold text-white ${t.pad} ${t.w} ${t.on ? 'bg-[#0098dc]' : 'bg-[#62bce6]'}`}>{t.badge}</span>
              )}
            </div>
            <p className="mt-[5px] text-[16px] leading-6 font-semibold tracking-[0.35px] whitespace-nowrap">
              {t.a}
              <br />
              {t.b}
            </p>
            {t.on && <div className="mt-[34px] h-[3px] w-[170px] bg-[#0098dc]" />}
          </div>
        ))}
      </nav>

      <section className="h-[872px] pt-10 pl-[374px]">
        <div className="flex h-10 w-[50px] items-center justify-center rounded-[5px] bg-[#f8bd58] text-[23px] font-bold text-white">P1</div>
        <div className="mt-[14px] flex h-6 items-center text-[16px]">
          <svg width="18" height="14" viewBox="0 0 18 14" className="mt-0.5 mr-[13px]">
            <path fillRule="evenodd" d="M4 0h10l2 4.500h2v1.500h-1l.5 1v7h-3v-2h-11v2h-3v-7l.5-1H0V4.500h2zM5 1.300l-1.200 3.700h10.400L13 1.300zM3 8v2h3V9zM15 8v2h-3V9z" fill="#000" />
          </svg>
          <span className="tracking-[0.300px]">480 мест</span>
        </div>
        <div className="mt-[15px] flex h-6 items-center text-[16px]">
          <svg width="18" height="24" viewBox="0 0 18 24" className="mt-2 mr-[13px]" fill="#000">
            <circle cx="12.500" cy="2.200" r="2.200" />
            <path d="M9 5h4l2 4 3 1.500-.7 1.500-4-1.500-.8-1.500-1 4 3 4v7h-2.200v-6l-3.300-3.500L8 19l-3 5H2.500l3.500-6.500L7 9 5.500 10v3.500H4V9z" />
            <path d="M1 13l3 .800-1.500 7L0 20z" />
          </svg>
          <span className="tracking-[0.180px]">1 мин до терминала</span>
        </div>

        <h2 className="mt-[67px] text-[20px] leading-[26px] font-semibold tracking-[0.700px]">
          Стоимость
          <br />
          парковки
        </h2>
        <p className="mt-[19px] text-[14px] leading-[21px] tracking-[0.060px] whitespace-nowrap text-[#5a5a5a]">
          Оплата банковскими картами<br />возможна в терминалах при выезде.<br />Оплатить парковку наличными<br />можно в терминалах,<br />расположенных рядом с основным<br />выездом и в здании аэровокзала.
        </p>
        <div className="mt-[30px] flex flex-col gap-5 text-[16px] leading-[22px]">
          {prices.map(([k, v]) => (
            <div key={k} className="flex">
              <b className="w-[124px] font-semibold tracking-[0.280px]">{k}</b>
              <span className="pt-px tracking-[0.600px] text-[#4a4a4a]">{v}</span>
            </div>
          ))}
          <div className="mt-[8px] flex">
            <b className="w-[124px] font-semibold tracking-[0.280px]">Далее</b>
            <span className="pt-px tracking-[0.500px] text-[#4a4a4a]">800₽ в сутки</span>
          </div>
        </div>
        <p className="mt-[21px] text-[14px] leading-[21px] tracking-[0.120px] text-[#0098dc]">
          <a className="border-b border-[#0098dc]">
            Парковка для пассажиров с<br />инвалидностью
          </a>
        </p>
      </section>

      <section className="h-[1129px] bg-[#0098dc] pl-[374px] text-white">
        <h2 className="h-[280px] pt-[113px] text-[48px] leading-[58px] font-medium tracking-[0.3px]">Важно!</h2>
        <div className="flex h-[428px] pl-10">
          <Rules items={rulesLeft} spacing="tracking-[0.02px]" />
          <Rules items={rulesRight} spacing="tracking-[0.07px]" />
        </div>
        <div className="pt-[6px] pl-[59px]">
          <p className="text-[16px] leading-6 tracking-[0.270px]">Справочная информация</p>
          <p className="mt-1 text-[24px] leading-[34px] font-bold tracking-[0.550px]">8 800 100-03-33</p>
          <div className="mt-[84px] flex text-[16px] leading-6 tracking-[0.250px]">
            <div className="w-[270px]">
              <Pdf />
              <p className="mt-[21px] w-[180px] tracking-[0.15px]">Правила пользования парковкой</p>
              <p className="mt-[10px] italic">4.88 МБ</p>
            </div>
            <div>
              <Pdf />
              <p className="mt-[21px]">Схема расположения парковок</p>
              <p className="mt-[10px] italic">2.57 МБ</p>
            </div>
          </div>
        </div>
      </section>

      <footer className="relative flex h-[263px] bg-[#242424] pt-[142px] pl-[363px] text-[14px] text-[#8a8a8a]">
        <i className="absolute top-[88px] left-[940px] size-8 rounded-full bg-[#323232]" />
        <i className="absolute top-[114px] left-[1374px] h-px w-0.5 bg-[#aaa]" />
        <div className="w-[303px]">
          <svg width="43" height="43" viewBox="0 0 43 43">
            <path d="M2.500 38V2.500H40.500V36" fill="none" stroke="#fff" strokeWidth="5" />
            <path d="M3 37H43V43H0z" fill="#fff" />
            <text x="8" y="34" fontSize="13.500" fontWeight="900" fill="#fff" fontFamily="Lato, sans-serif">AR</text>
          </svg>
          <p className="mt-1 text-[4.500px] leading-[5px] tracking-[0.050px] text-white">Аэропорты Регионы</p>
        </div>
        <div className="w-[266px]">
          <p className="pt-[5px] leading-5 text-white">7 343 226-85-82</p>
          <p className="mt-1.5 flex items-center leading-5">
            <svg width="14" height="10" viewBox="0 0 14 10" className="mr-[13px]">
              <path d="M0 0H1.500L7 4.500 12.500 0H14V10H0z M2.500 0h9L7 3z" fill="#fff" />
            </svg>
            <span className="tracking-[0.150px]">Обратная связь</span>
          </p>
        </div>
        <p className="pt-[28px] leading-5 tracking-[0.200px]">Антикоррупционная «горячая линия»</p>
      </footer>

      <CookieBar pos="top-[884px]" />
      <CookieBar pos="top-[1832px]" />
      <CookieBar pos="top-[2780px]" />
      <CookieBar pos="top-[3728px]" />
      <CookieBar pos="top-[3877px]" />
    </div>
  );
}
